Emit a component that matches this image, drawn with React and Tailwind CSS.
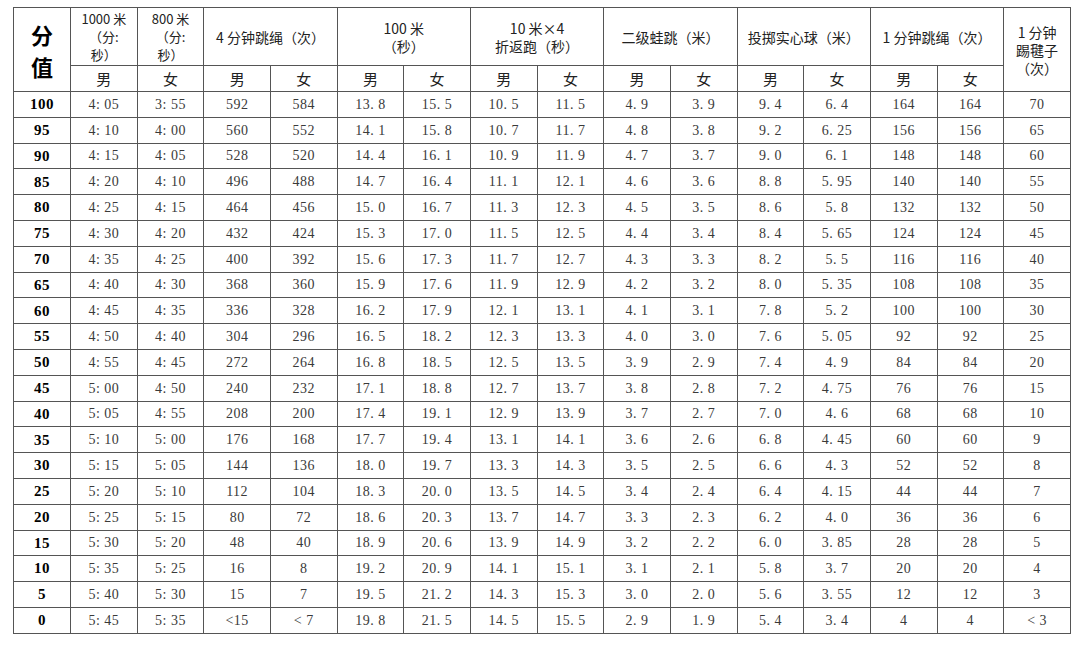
const rows = [
  ["100", "4: 05", "3: 55", "592", "584", "13. 8", "15. 5", "10. 5", "11. 5", "4. 9", "3. 9", "9. 4", "6. 4", "164", "164", "70"],
  ["95", "4: 10", "4: 00", "560", "552", "14. 1", "15. 8", "10. 7", "11. 7", "4. 8", "3. 8", "9. 2", "6. 25", "156", "156", "65"],
  ["90", "4: 15", "4: 05", "528", "520", "14. 4", "16. 1", "10. 9", "11. 9", "4. 7", "3. 7", "9. 0", "6. 1", "148", "148", "60"],
  ["85", "4: 20", "4: 10", "496", "488", "14. 7", "16. 4", "11. 1", "12. 1", "4. 6", "3. 6", "8. 8", "5. 95", "140", "140", "55"],
  ["80", "4: 25", "4: 15", "464", "456", "15. 0", "16. 7", "11. 3", "12. 3", "4. 5", "3. 5", "8. 6", "5. 8", "132", "132", "50"],
  ["75", "4: 30", "4: 20", "432", "424", "15. 3", "17. 0", "11. 5", "12. 5", "4. 4", "3. 4", "8. 4", "5. 65", "124", "124", "45"],
  ["70", "4: 35", "4: 25", "400", "392", "15. 6", "17. 3", "11. 7", "12. 7", "4. 3", "3. 3", "8. 2", "5. 5", "116", "116", "40"],
  ["65", "4: 40", "4: 30", "368", "360", "15. 9", "17. 6", "11. 9", "12. 9", "4. 2", "3. 2", "8. 0", "5. 35", "108", "108", "35"],
  ["60", "4: 45", "4: 35", "336", "328", "16. 2", "17. 9", "12. 1", "13. 1", "4. 1", "3. 1", "7. 8", "5. 2", "100", "100", "30"],
  ["55", "4: 50", "4: 40", "304", "296", "16. 5", "18. 2", "12. 3", "13. 3", "4. 0", "3. 0", "7. 6", "5. 05", "92", "92", "25"],
  ["50", "4: 55", "4: 45", "272", "264", "16. 8", "18. 5", "12. 5", "13. 5", "3. 9", "2. 9", "7. 4", "4. 9", "84", "84", "20"],
  ["45", "5: 00", "4: 50", "240", "232", "17. 1", "18. 8", "12. 7", "13. 7", "3. 8", "2. 8", "7. 2", "4. 75", "76", "76", "15"],
  ["40", "5: 05", "4: 55", "208", "200", "17. 4", "19. 1", "12. 9", "13. 9", "3. 7", "2. 7", "7. 0", "4. 6", "68", "68", "10"],
  ["35", "5: 10", "5: 00", "176", "168", "17. 7", "19. 4", "13. 1", "14. 1", "3. 6", "2. 6", "6. 8", "4. 45", "60", "60", "9"],
  ["30", "5: 15", "5: 05", "144", "136", "18. 0", "19. 7", "13. 3", "14. 3", "3. 5", "2. 5", "6. 6", "4. 3", "52", "52", "8"],
  ["25", "5: 20", "5: 10", "112", "104", "18. 3", "20. 0", "13. 5", "14. 5", "3. 4", "2. 4", "6. 4", "4. 15", "44", "44", "7"],
  ["20", "5: 25", "5: 15", "80", "72", "18. 6", "20. 3", "13. 7", "14. 7", "3. 3", "2. 3", "6. 2", "4. 0", "36", "36", "6"],
  ["15", "5: 30", "5: 20", "48", "40", "18. 9", "20. 6", "13. 9", "14. 9", "3. 2", "2. 2", "6. 0", "3. 85", "28", "28", "5"],
  ["10", "5: 35", "5: 25", "16", "8", "19. 2", "20. 9", "14. 1", "15. 1", "3. 1", "2. 1", "5. 8", "3. 7", "20", "20", "4"],
  ["5", "5: 40", "5: 30", "15", "7", "19. 5", "21. 2", "14. 3", "15. 3", "3. 0", "2. 0", "5. 6", "3. 55", "12", "12", "3"],
  ["0", "5: 45", "5: 35", "<15", "< 7", "19. 8", "21. 5", "14. 5", "15. 5", "2. 9", "1. 9", "5. 4", "3. 4", "4", "4", "< 3"],
]

const cell = "border border-[#555] text-center align-middle p-0"
const head = `${cell} text-[13px] leading-[18px] text-[#222] font-normal font-['Noto_Sans_CJK_SC',sans-serif]`

export default function App() {
  return (
    <div className="w-[1080px] h-[646px] bg-white pt-[7px] pl-[13px]">
      <table className="table-fixed border-collapse w-[1058px]">
        <colgroup>
          <col className="w-[57px]" />
          {Array.from({ length: 15 }).map((_, i) => (
            <col key={i} />
          ))}
        </colgroup>
        <thead>
          <tr className="h-[58px]">
            <th rowSpan={2} className={`${cell} text-[22px] leading-[32px] font-bold text-black font-['Noto_Sans_CJK_SC',sans-serif]`}>
              <div>分</div>
              <div>值</div>
            </th>
            <th className={head}>
              1000 米<br />（分:<br />秒）
            </th>
            <th className={head}>
              800 米<br />（分:<br />秒）
            </th>
            <th colSpan={2} className={`${head} text-[14px]`}>4 分钟跳绳（次）</th>
            <th colSpan={2} className={`${head} text-[14px]`}>
              100 米<br />（秒）
            </th>
            <th colSpan={2} className={`${head} text-[14px]`}>
              10 米×4<br />折返跑（秒）
            </th>
            <th colSpan={2} className={`${head} text-[14px]`}>二级蛙跳（米）</th>
            <th colSpan={2} className={`${head} text-[14px]`}>投掷实心球（米）</th>
            <th colSpan={2} className={`${head} text-[14px]`}>1 分钟跳绳（次）</th>
            <th rowSpan={2} className={`${head} text-[14px]`}>
              1 分钟<br />踢毽子<br />（次）
            </th>
          </tr>
          <tr className="h-[26px]">
            {["男", "女", "男", "女", "男", "女", "男", "女", "男", "女", "男", "女", "男", "女"].map((g, i) => (
              <th key={i} className={`${head} text-[15px]`}>
                {g}
              </th>
            ))}
          </tr>
        </thead>
        <tbody>
          {rows.map((r) => (
            <tr key={r[0]} className="h-[25.8px]">
              {r.map((v, i) => (
                <td
                  key={i}
                  className={
                    i === 0
                      ? `${cell} text-[15px] font-bold text-black font-['Liberation_Serif',serif] tracking-[0.5px]`
                      : `${cell} text-[14px] text-[#3a3a3a] font-['Liberation_Serif',serif] tracking-[0.5px]`
                  }
                >
                  {v}
                </td>
              ))}
            </tr>
          ))}
        </tbody>
      </table>
    </div>
  )
}
